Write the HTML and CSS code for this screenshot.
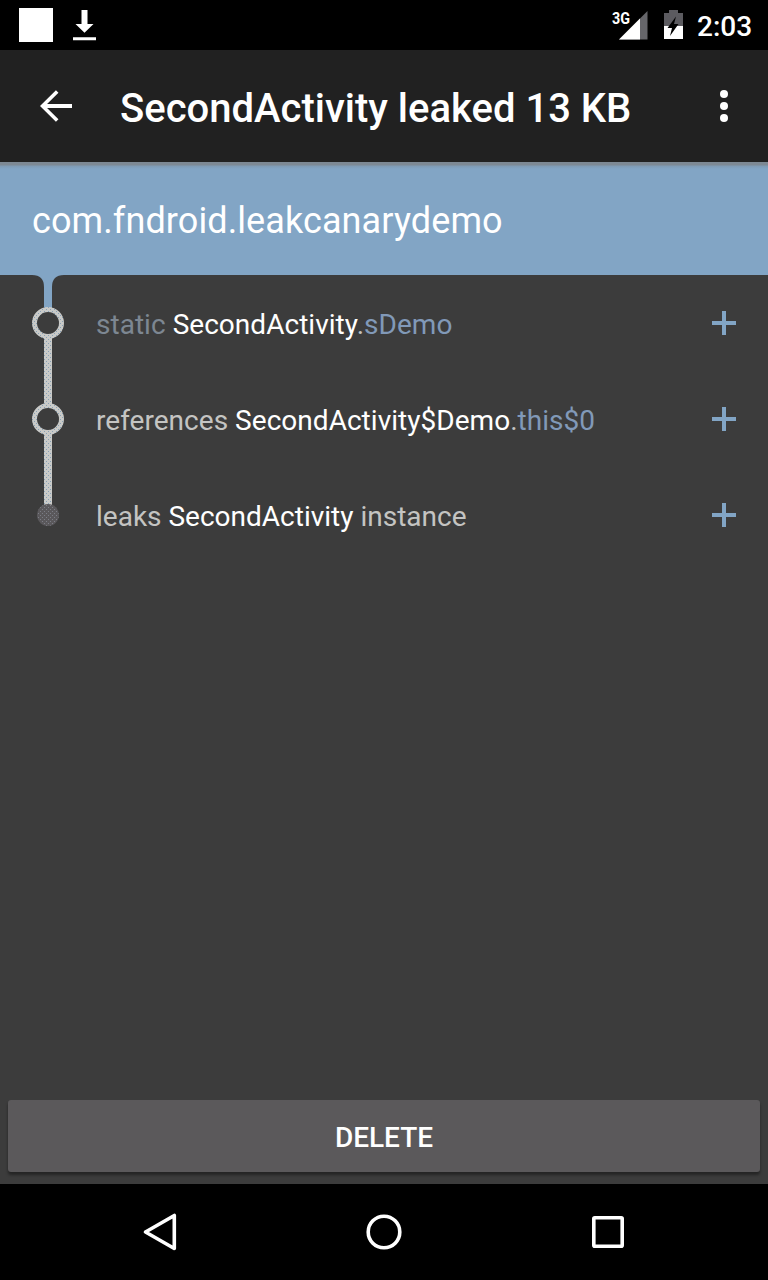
FILE: index.html
```html
<!DOCTYPE html>
<html lang="en">
<head>
<meta charset="utf-8">
<title>SecondActivity leaked 13 KB</title>
<link rel="stylesheet" href="styles.css">
</head>
<body>
<div class="screen">
  <div class="status-bar">
    <svg class="status-left" width="110" height="50" viewBox="0 0 110 50">
      <rect x="19" y="8" width="34" height="34" fill="#fff"/>
      <path d="M81.500 10h6v14h6l-9 8.700-9-8.700h6zM73 37.200h23v3H73z" fill="#fff"/>
    </svg>
    <div class="status-right">
      <svg class="signal" width="40" height="50" viewBox="608 0 40 50">
        <path d="M619 39.500 647.500 11V39.500z" fill="#66666a"/>
        <path d="M619 39.500 640 18.500V39.500z" fill="#fff"/>
        <text class="network" x="612" y="23.500" textLength="18" lengthAdjust="spacingAndGlyphs">3G</text>
      </svg>
      <svg class="battery" width="20" height="50" viewBox="664 0 20 50">
        <path d="M664 13h5v-3h9v3h5v13.500h-19z" fill="#5c5b60"/>
        <path d="M664 26h19v13h-19z" fill="#fff"/>
        <path d="M676 16.500l-8.500 11.500h4.500l-2 8 8.500-12h-4.500z" fill="#000"/>
      </svg>
      <span class="clock">2:03</span>
    </div>
  </div>

  <header class="toolbar">
    <svg class="back" width="32" height="32" viewBox="0 0 32 32">
      <path d="M32 16H3" fill="none" stroke="#fff" stroke-width="4"/>
      <path d="M17.200 1.500 2.500 16 17.200 30.500" fill="none" stroke="#fff" stroke-width="3.600"/>
    </svg>
    <h1 class="title">SecondActivity leaked 13 KB</h1>
    <svg class="overflow" width="8" height="32" viewBox="0 0 8 32">
      <g fill="#fff"><circle cx="4" cy="4" r="4"/><circle cx="4" cy="16" r="4"/><circle cx="4" cy="28" r="4"/></g>
    </svg>
  </header>

  <div class="package">com.fndroid.leakcanarydemo</div>

  <main class="trace">
    <div class="row">
      <svg class="connector" width="48" height="96" viewBox="0 0 48 96">
        <defs>
          <pattern id="grain" width="4" height="4" patternUnits="userSpaceOnUse">
            <rect width="4" height="4" fill="#c9cac8"/>
            <path d="M0 0h1v1H0zM2 2h1v1H2z" fill="#88a0b5"/>
          </pattern>
          <pattern id="grain-dark" width="4" height="4" patternUnits="userSpaceOnUse">
            <rect width="4" height="4" fill="#5a585b"/>
            <path d="M0 0h1v1H0zM2 2h1v1H2z" fill="#7b7d86"/>
          </pattern>
        </defs>
        <path d="M8 0H40Q28 0 28 12V33H20V12Q20 0 8 0z" fill="#82a5c5"/>
        <path d="M20 62h8v34h-8z" fill="url(#grain)"/>
        <circle cx="24" cy="48" r="13.500" fill="none" stroke="url(#grain)" stroke-width="5"/>
      </svg>
      <p class="ref wide"><span class="static">static</span> <span class="cls">SecondActivity</span>.<span class="field">sDemo</span></p>
      <svg class="plus" width="24" height="24"><path d="M10 0h4v10h10v4H14v10h-4V14H0v-4h10z"/></svg>
    </div>
    <div class="row">
      <svg class="connector" width="48" height="96" viewBox="0 0 48 96">
        <path d="M20 0h8v34h-8zM20 62h8v34h-8z" fill="url(#grain)"/>
        <circle cx="24" cy="48" r="13.500" fill="none" stroke="url(#grain)" stroke-width="5"/>
      </svg>
      <p class="ref wide">references <span class="cls">SecondActivity$Demo</span>.<span class="field">this$0</span></p>
      <svg class="plus" width="24" height="24"><path d="M10 0h4v10h10v4H14v10h-4V14H0v-4h10z"/></svg>
    </div>
    <div class="row">
      <svg class="connector" width="48" height="96" viewBox="0 0 48 96">
        <path d="M20 0h8v38h-8z" fill="url(#grain)"/>
        <circle cx="24" cy="48" r="11" fill="url(#grain-dark)"/>
      </svg>
      <p class="ref">leaks <span class="cls">SecondActivity</span> instance</p>
      <svg class="plus" width="24" height="24"><path d="M10 0h4v10h10v4H14v10h-4V14H0v-4h10z"/></svg>
    </div>
  </main>

  <button class="delete">DELETE</button>

  <nav class="nav-bar">
    <svg width="40" height="40" viewBox="140 1212 40 40"><path d="M174.300 1215.500V1248.500L145.500 1232z"/></svg>
    <svg width="40" height="40" viewBox="364 1212 40 40"><circle cx="384" cy="1232" r="15.800"/></svg>
    <svg width="40" height="40" viewBox="588 1212 40 40"><rect x="593.800" y="1217.800" width="28.400" height="28.400" rx="1"/></svg>
  </nav>
</div>
</body>
</html>
```
FILE: styles.css
```css
* { box-sizing: border-box; }
body { margin: 0; background: #000; font-family: Roboto, "Liberation Sans", sans-serif; }
svg { display: block; flex: none; }
.screen { width: 768px; height: 1280px; display: flex; flex-direction: column; background: #3c3c3c; overflow: hidden; }

.status-bar { height: 50px; flex: none; display: flex; justify-content: space-between; background: #000; padding-right: 16px; }
.status-right { display: flex; align-items: center; }
.battery { margin: 0 13px 0 16px; }
.network { font-family: Roboto, sans-serif; font-size: 17px; font-weight: 700; fill: #fff; }
.clock { color: #fff; font-size: 28px; font-weight: 500; line-height: 50px; padding-top: 4px; width: 55px; white-space: nowrap; }

.toolbar { height: 112px; flex: none; display: flex; align-items: center; background: #212121; padding: 0 40px; }
.title { flex: 1; margin: 0 0 0 48px; padding-top: 6px; color: #fff; font-size: 40px; font-weight: 500; line-height: 48px; white-space: nowrap; }

.package { height: 113px; flex: none; padding: 3px 32px 0; line-height: 112px; font-size: 36px; letter-spacing: .1px; color: #fff;
  background: linear-gradient(#7d8994 0, #7d8994 3px, #7f9bb4 4px, #82a5c5 7px); }

.trace { flex: 1; }
.row { height: 96px; display: flex; align-items: center; padding: 0 32px 0 24px; }
.ref { flex: 1; margin: 0 0 0 24px; padding-top: 3px; color: #c4c4c2; font-size: 28px; line-height: 34px; white-space: nowrap; }
.wide { letter-spacing: .03px; }
.static { color: #7d8792; }
.cls { color: #fff; }
.field { color: #8199b8; }
.plus { fill: #82a5c5; }

.delete { flex: none; height: 72px; margin: 0 8px 12px; padding: 2px 0 0; border: 0; border-radius: 3px; background: #5b595b; color: #fff;
  font: 500 28px Roboto, "Liberation Sans", sans-serif; box-shadow: 0 3px 3px rgba(0, 0, 0, .4); }

.nav-bar { height: 96px; flex: none; display: flex; justify-content: space-between; align-items: center; padding: 0 140px; background: #000; }
.nav-bar svg { fill: none; stroke: #fff; stroke-width: 3.6; stroke-linejoin: round; }
```
